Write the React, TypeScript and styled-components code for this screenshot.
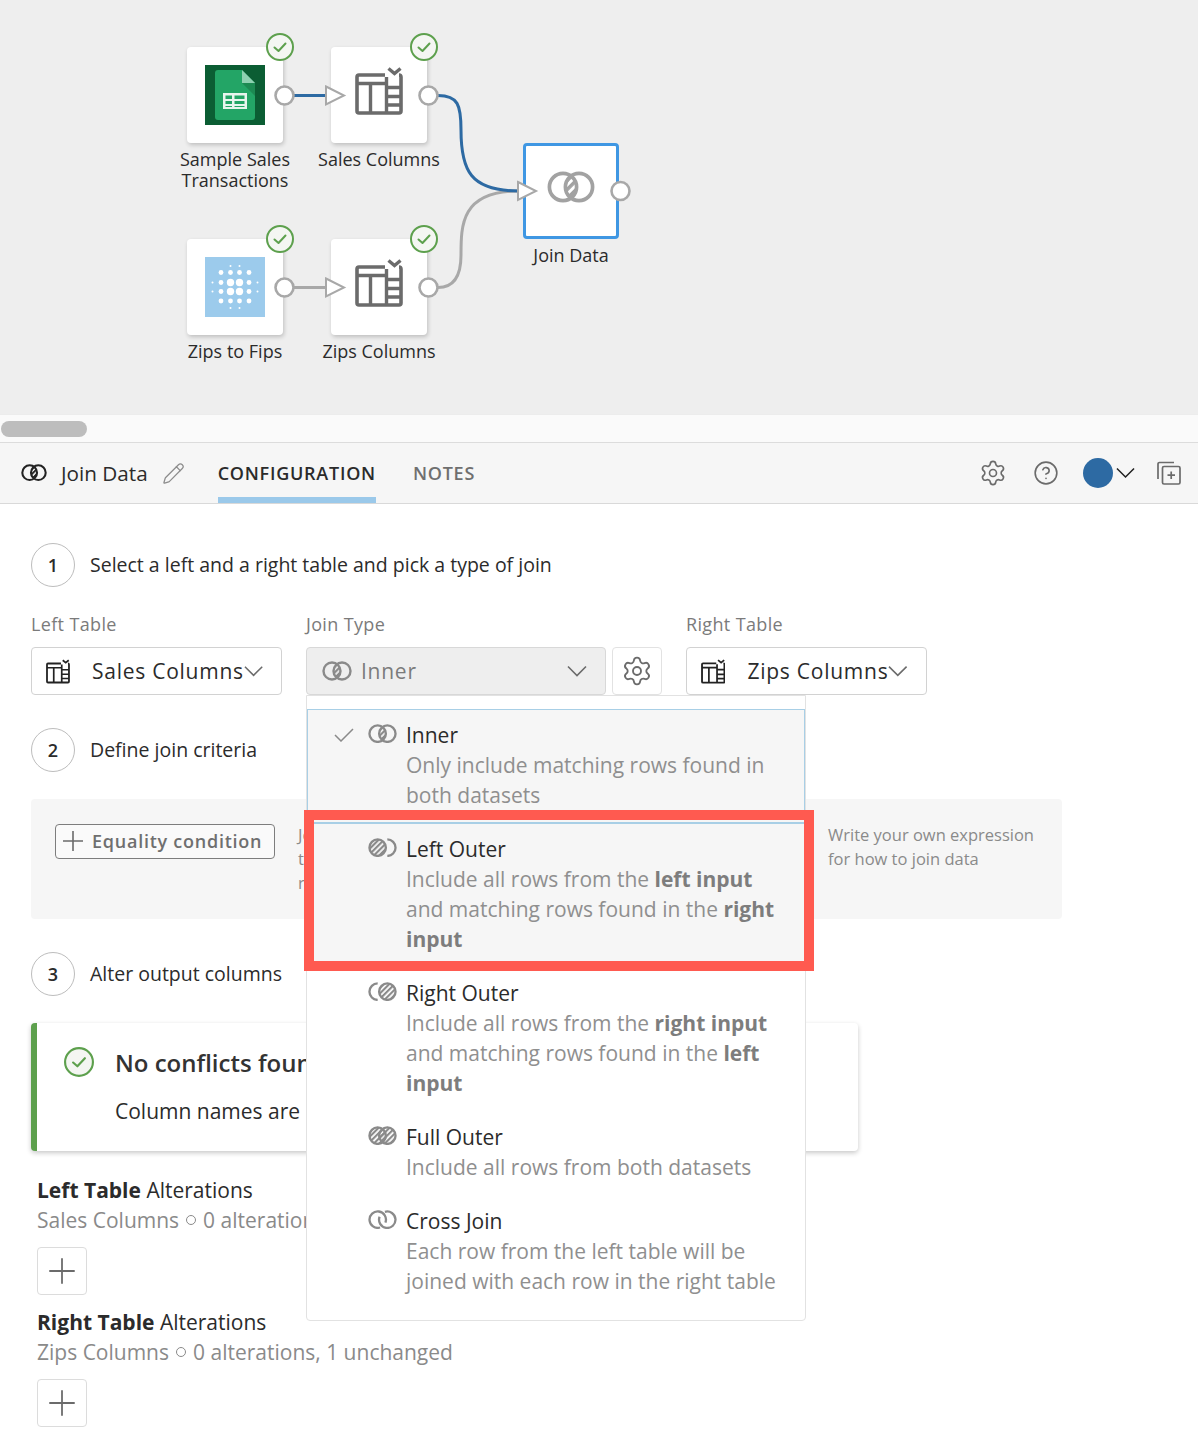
import { useId } from "react";
import styled, { createGlobalStyle } from "styled-components";
import { Settings, CircleHelp, Pencil } from "lucide-react";

const GlobalStyle = createGlobalStyle`
  * { box-sizing: border-box; }
  html, body { margin: 0; padding: 0; background: #fff; }
  body { font-family: "Open Sans", "Liberation Sans", sans-serif; color: #222; }
`;

const Page = styled.div`
  position: relative;
  width: 1198px;
  height: 1450px;
  overflow: hidden;
`;

/* flow canvas */
const Canvas = styled.div`
  position: relative;
  height: 414px;
  background: #eeeeee;
`;

const Wires = styled.svg`
  position: absolute;
  inset: 0;
  width: 100%;
  height: 100%;
`;

const Node = styled.div<{ $x: number; $y: number }>`
  position: absolute;
  left: ${(p) => p.$x}px;
  top: ${(p) => p.$y}px;
  width: 96px;
`;

const NodeCard = styled.div<{ $selected?: boolean }>`
  position: relative;
  width: 96px;
  height: 96px;
  display: flex;
  align-items: center;
  justify-content: center;
  padding-bottom: ${(p) => (p.$selected ? "8px" : "0")};
  background: #fff;
  border-radius: 4px;
  border: ${(p) => (p.$selected ? "3px solid #3f97e3" : "none")};
  box-shadow: ${(p) => (p.$selected ? "none" : "1px 2px 4px rgba(0, 0, 0, 0.2)")};
`;

const NodeTableArt = styled.div`
  display: flex;
  margin-top: -9px;
`;

const NodeLabel = styled.div`
  width: 160px;
  margin: 6px 0 0 -32px;
  font-size: 18px;
  line-height: 21px;
  text-align: center;
  color: #2b2b2b;
`;

const Badge = styled.div`
  position: absolute;
  right: -11px;
  top: -14px;
  width: 28px;
  height: 28px;
  display: flex;
`;

/* scroll bar */
const ScrollTrack = styled.div`
  height: 29px;
  padding: 6px 1px;
  background: #fafafa;
  border-top: 1px solid #ececec;
  border-bottom: 1px solid #dcdcdc;
`;

const ScrollThumb = styled.div`
  width: 86px;
  height: 16px;
  border-radius: 8px;
  background: #bdbdbd;
`;

/* panel header */
const PanelHeader = styled.header`
  height: 61px;
  display: flex;
  align-items: stretch;
  padding: 0 17px 0 21px;
  background: #f6f6f6;
  border-bottom: 1px solid #d9d9d9;
`;

const PanelTitle = styled.div`
  display: flex;
  align-items: center;
  font-size: 20.7px;
  color: #2b2b2b;
  svg:first-child { margin-right: 14px; }
  svg:last-child { margin-left: 14px; color: #8c8c8c; }
`;

const Tab = styled.div<{ $active?: boolean }>`
  display: flex;
  align-items: center;
  height: 60px;
  margin-left: ${(p) => (p.$active ? "33px" : "37px")};
  font-size: 18px;
  font-weight: 600;
  letter-spacing: 0.75px;
  color: ${(p) => (p.$active ? "#2b2b2b" : "#6f6f6f")};
  border-bottom: 6px solid ${(p) => (p.$active ? "#9bc9ea" : "transparent")};
  padding-top: 6px;
`;

const HeaderActions = styled.div`
  margin-left: auto;
  display: flex;
  align-items: center;
  color: #6b6b6b;
`;

const ActionGap = styled.div<{ $w: number }>`
  width: ${(p) => p.$w}px;
`;

const Avatar = styled.div`
  width: 30px;
  height: 30px;
  border-radius: 50%;
  background: #2d6aa3;
`;

/* panel body */
const Body = styled.main`
  padding: 39px 0 0 31px;
`;

const StepRow = styled.div<{ $top: number }>`
  display: flex;
  align-items: center;
  gap: 15px;
  margin-top: ${(p) => p.$top}px;
  font-size: 19.5px;
  line-height: 26px;
  color: #2b2b2b;
`;

const StepNumber = styled.div`
  width: 44px;
  height: 44px;
  display: flex;
  align-items: center;
  justify-content: center;
  border: 1px solid #bdbdbd;
  border-radius: 50%;
  font-size: 18px;
  font-weight: 600;
`;

const FieldRow = styled.div`
  display: flex;
  margin-top: 25px;
`;

const Field = styled.div<{ $gapAfter: number }>`
  margin-right: ${(p) => p.$gapAfter}px;
`;

const FieldLabel = styled.div`
  height: 24px;
  margin-bottom: 11px;
  font-size: 18px;
  font-weight: 500;
  letter-spacing: 0.35px;
  line-height: 24px;
  color: #7b7b7b;
`;

const Select = styled.div<{ $w: number; $disabled?: boolean }>`
  width: ${(p) => p.$w}px;
  height: 48px;
  display: flex;
  align-items: center;
  padding: 0 18px 0 ${(p) => (p.$disabled ? "15px" : "14px")};
  border: 1px solid ${(p) => (p.$disabled ? "#d8d8d8" : "#d2d2d2")};
  border-radius: 4px;
  background: ${(p) => (p.$disabled ? "#eeeeee" : "#fff")};
  color: ${(p) => (p.$disabled ? "#7b7b7b" : "#2b2b2b")};
  font-size: 21px;
  letter-spacing: 0.75px;
`;

const SelectText = styled.span<{ $ml: number }>`
  margin-left: ${(p) => p.$ml}px;
  flex: 1;
  white-space: nowrap;
`;

const GearButton = styled.div`
  width: 50px;
  height: 48px;
  margin-right: 24px;
  display: flex;
  align-items: center;
  justify-content: center;
  border: 1px solid #e2e2e2;
  border-radius: 4px;
  color: #6b6b6b;
`;

const CriteriaPanel = styled.section`
  width: 1031px;
  height: 120px;
  margin-top: 27px;
  padding: 25px 0 0 24px;
  display: grid;
  grid-template-columns: 243px 530px 1fr;
  border-radius: 4px;
  background: #f6f6f6;
`;

const OutlineButton = styled.div`
  width: 220px;
  height: 35px;
  display: flex;
  align-items: center;
  gap: 8px;
  padding: 0 0 1px 6px;
  border: 1px solid #7d7d7d;
  border-radius: 4px;
  background: #fafafa;
  font-size: 18px;
  font-weight: 600;
  letter-spacing: 0.75px;
  color: #6f6f6f;
`;

const CriteriaHint = styled.p`
  margin: -1px 0 0;
  font-size: 16.5px;
  line-height: 24px;
  color: #8a8a8a;
`;

const AlertCard = styled.section`
  width: 827px;
  height: 128px;
  margin-top: 27px;
  display: flex;
  padding: 24px 0 0 27px;
  background: #fff;
  border-left: 6px solid #5da04d;
  border-radius: 4px;
  box-shadow: 0 2px 5px rgba(0, 0, 0, 0.22);
`;

const AlertBody = styled.div`
  margin-left: 21px;
`;

const AlertTitle = styled.div`
  font-size: 24px;
  font-weight: 600;
  line-height: 32px;
  color: #333;
`;

const AlertText = styled.div`
  margin-top: 18px;
  font-size: 21px;
  line-height: 28px;
  color: #2b2b2b;
`;

const Alterations = styled.div<{ $top: number }>`
  margin: ${(p) => p.$top}px 0 0 6px;
`;

const AlterTitle = styled.div`
  font-size: 21px;
  line-height: 30px;
  color: #2b2b2b;
  b { font-weight: 700; }
`;

const AlterMeta = styled.div`
  display: flex;
  align-items: center;
  gap: 7px;
  white-space: nowrap;
  font-size: 21px;
  line-height: 30px;
  color: #8a8a8a;
`;

const MetaDot = styled.span`
  flex: none;
  width: 10px;
  height: 10px;
  border: 1px solid #8a8a8a;
  border-radius: 50%;
`;

const AddButton = styled.div`
  width: 50px;
  height: 48px;
  margin-top: 12px;
  display: flex;
  align-items: center;
  justify-content: center;
  border: 1px solid #dcdcdc;
  border-radius: 4px;
  color: #6b6b6b;
`;

/* dropdown that lies over the panel */
const Menu = styled.ul`
  position: absolute;
  left: 306px;
  top: 695px;
  width: 500px;
  height: 626px;
  margin: 0;
  padding: 13px 0 0;
  list-style: none;
  background: #fff;
  border: 1px solid #e2e2e2;
  border-radius: 0 0 4px 4px;
`;

const MenuItem = styled.li<{ $active?: boolean; $hover?: boolean }>`
  display: grid;
  grid-template-columns: 45px 39px 1fr;
  padding: 10px 20px 12px 14px;
  background: ${(p) => (p.$active || p.$hover ? "#f6f6f6" : "transparent")};
  border: 1px solid ${(p) => (p.$active ? "#a8cfe6" : "transparent")};
  border-top-color: ${(p) => (p.$active || p.$hover ? "#a8cfe6" : "transparent")};
`;

const MenuCheck = styled.div`
  padding: 5px 0 0 12px;
  color: #8a8a8a;
`;

const MenuIcon = styled.div`
  padding: 4px 0 0 1px;
`;

const MenuTitle = styled.div`
  font-size: 21px;
  line-height: 30px;
  color: #2b2b2b;
`;

const MenuDesc = styled.div`
  font-size: 21px;
  line-height: 30px;
  color: #8f8f8f;
  b { font-weight: 700; color: #7d7d7d; }
`;

const RedFrame = styled.div`
  position: absolute;
  left: 304px;
  top: 810px;
  width: 510px;
  height: 161px;
  border: 10px solid #ff5a50;
  pointer-events: none;
`;

/* drawings */
function Check({ size = 28 }: { size?: number }) {
  return (
    <svg width={size} height={size} viewBox="0 0 28 28" fill="none">
      <circle cx="14" cy="14" r="13" fill="#f4f6f2" stroke="#5da04d" strokeWidth="2" />
      <path d="M8.5 14.5l4 3.5 7-7.5" stroke="#5da04d" strokeWidth="2" strokeLinecap="round" strokeLinejoin="round" />
    </svg>
  );
}

function TableIcon({ size = 48, color = "#6b6b6b" }: { size?: number; color?: string }) {
  return (
    <svg width={size} height={size} viewBox="0 0 48 48" fill="none" stroke={color}>
      <path d="M30 8H4A2 2 0 0 0 2 10V44A2 2 0 0 0 4 46H44A2 2 0 0 0 46 44V10A2 2 0 0 0 44 8" strokeWidth="3.6" />
      <path d="M2 16.5H31M15.5 16.5V45M31.5 10V45M31.5 20.5H46M31.5 29.5H46M31.5 38H46" strokeWidth="3.4" />
      <path d="M33.5 1.5L39.5 6.5L45.5 1.5" strokeWidth="3.4" />
    </svg>
  );
}

function SheetsLogo() {
  return (
    <svg width="60" height="60" viewBox="0 0 60 60">
      <rect width="60" height="60" fill="#0b5d33" />
      <path d="M13 5H37L50 18V52A3 3 0 0 1 47 55H13A3 3 0 0 1 10 52V8A3 3 0 0 1 13 5Z" fill="#23a566" />
      <path d="M37 5L50 18H37Z" fill="#8ed1b1" />
      <path d="M37 18L50 31V18Z" fill="#1c8a52" />
      <path d="M18 28H42V44H18ZM20.5 30.5V34H27V30.5ZM29.5 30.5V34H39.5V30.5ZM20.5 36V39H27V36ZM29.5 36V39H39.5V36ZM20.5 41V42H27V41ZM29.5 41V42H39.5V41Z" fill="#e8f5ee" fillRule="evenodd" />
    </svg>
  );
}

const DOTS: [number, number, number][] = [
  [25.5, 9, 1], [34.5, 9, 1],
  [16, 15.5, 2.4], [25.5, 15.5, 2.4], [34.5, 15.5, 2.4], [44, 15.5, 2.4],
  [7.5, 25.5, 1], [16, 25.5, 2.4], [25.5, 25.5, 3.7], [34.5, 25.5, 3.7], [44, 25.5, 2.4], [52.5, 25.5, 1],
  [7.5, 34.5, 1], [16, 34.5, 2.4], [25.5, 34.5, 3.7], [34.5, 34.5, 3.7], [44, 34.5, 2.4], [52.5, 34.5, 1],
  [16, 44, 2.4], [25.5, 44, 2.4], [34.5, 44, 2.4], [44, 44, 2.4],
  [25.5, 51, 1], [34.5, 51, 1],
];

function DotsLogo() {
  return (
    <svg width="60" height="60" viewBox="0 0 60 60">
      <rect width="60" height="60" fill="#9ccbec" />
      {DOTS.map(([cx, cy, r]) => (
        <circle key={`${cx}-${cy}`} cx={cx} cy={cy} r={r} fill="#fff" />
      ))}
    </svg>
  );
}

type JoinKind = "inner" | "left" | "right" | "full" | "cross";

function JoinIcon({ kind, width = 29, color = "#8a8a8a", strokeWidth = 2.4 }: { kind: JoinKind; width?: number; color?: string; strokeWidth?: number }) {
  const id = useId().replace(/[^a-zA-Z0-9]/g, "");
  const height = (width * 20) / 30;
  const hatch = `url(#${id}h)`;
  return (
    <svg width={width} height={height} viewBox="0 0 30 20" fill="none" stroke={color} strokeWidth={strokeWidth}>
      <defs>
        <pattern id={`${id}h`} width="4" height="4" patternUnits="userSpaceOnUse" patternTransform="rotate(-45)">
          <rect width="4" height="2.2" fill={color} stroke="none" />
        </pattern>
        <clipPath id={`${id}l`}>
          <circle cx="10" cy="10" r="8.5" />
        </clipPath>
      </defs>
      {kind === "inner" && (
        <>
          <circle cx="10" cy="10" r="8.5" />
          <circle cx="20" cy="10" r="8.5" />
          <circle cx="20" cy="10" r="8.5" clipPath={`url(#${id}l)`} fill={hatch} stroke="none" />
        </>
      )}
      {kind === "left" && (
        <>
          <circle cx="10" cy="10" r="8.5" fill={hatch} />
          <path d="M20 1.5A8.5 8.5 0 0 1 20 18.5" />
        </>
      )}
      {kind === "right" && (
        <>
          <path d="M10 1.5A8.5 8.5 0 0 0 10 18.5" />
          <circle cx="20" cy="10" r="8.5" fill={hatch} />
        </>
      )}
      {kind === "full" && (
        <>
          <circle cx="10" cy="10" r="8.5" fill={hatch} />
          <circle cx="20" cy="10" r="8.5" fill={hatch} />
        </>
      )}
      {kind === "cross" && (
        <>
          <path d="M12.5 18.1A8.5 8.5 0 1 1 18 13" />
          <path d="M17.5 1.9A8.5 8.5 0 1 1 12 7" />
        </>
      )}
    </svg>
  );
}

function Chevron({ size = 20, color = "#6b6b6b" }: { size?: number; color?: string }) {
  return (
    <svg width={size} height={size * 0.6} viewBox="0 0 20 12" fill="none" stroke={color} strokeWidth="1.6">
      <path d="M1 1.5l9 9 9-9" />
    </svg>
  );
}

function ThinPlus({ size = 22, color = "#6b6b6b", weight = 1.6 }: { size?: number; color?: string; weight?: number }) {
  return (
    <svg width={size} height={size} viewBox="0 0 22 22" fill="none" stroke={color} strokeWidth={weight}>
      <path d="M11 1V21M1 11H21" />
    </svg>
  );
}

function AddCopy() {
  return (
    <svg width="24" height="24" viewBox="0 0 24 24" fill="none" stroke="#6b6b6b" strokeWidth="1.7">
      <path d="M17 1.5H2.5A1.5 1.5 0 0 0 1 3V18" />
      <rect x="5.5" y="5.5" width="17.5" height="17.5" rx="1.5" />
      <path d="M14.2 10.5V18M10.5 14.2H18" />
    </svg>
  );
}

function TinyCheck() {
  return (
    <svg width="20" height="14" viewBox="0 0 20 14" fill="none" stroke="#8a8a8a" strokeWidth="1.5">
      <path d="M1 7l6 6L19 1" />
    </svg>
  );
}

function Port({ cx, cy }: { cx: number; cy: number }) {
  return <circle cx={cx} cy={cy} r="9" fill="#fff" stroke="#a8a8a8" strokeWidth="2.6" />;
}

function Arrow({ x, y }: { x: number; y: number }) {
  return <path d={`M${x} ${y - 9}L${x + 18} ${y}L${x} ${y + 9}Z`} fill="#fff" stroke="#a8a8a8" strokeWidth="2" />;
}

const NODES = [
  { x: 187, y: 47, label: "Sample Sales Transactions", art: <SheetsLogo /> },
  { x: 331, y: 47, label: "Sales Columns", art: <NodeTableArt><TableIcon /></NodeTableArt> },
  { x: 187, y: 239, label: "Zips to Fips", art: <DotsLogo /> },
  { x: 331, y: 239, label: "Zips Columns", art: <NodeTableArt><TableIcon /></NodeTableArt> },
];

export default function App() {
  return (
    <Page>
      <GlobalStyle />
      <Canvas>
        {NODES.map((n) => (
          <Node key={n.label} $x={n.x} $y={n.y}>
            <NodeCard>
              {n.art}
              <Badge>
                <Check />
              </Badge>
            </NodeCard>
            <NodeLabel>{n.label === "Sample Sales Transactions" ? <>Sample Sales<br />Transactions</> : n.label}</NodeLabel>
          </Node>
        ))}
        <Node $x={523} $y={143}>
          <NodeCard $selected>
            <JoinIcon kind="inner" width={48} color="#a2a2a2" strokeWidth={2.3} />
          </NodeCard>
          <NodeLabel>Join Data</NodeLabel>
        </Node>
        <Wires viewBox="0 0 1198 414" fill="none">
          <path d="M294 95.5H326" stroke="#2d6aa3" strokeWidth="3" />
          <path d="M294 287.5H326" stroke="#a8a8a8" strokeWidth="3" />
          <path d="M438 287.5C455 287.5 461 275 461 255C461 225 461 191 519 191" stroke="#a8a8a8" strokeWidth="3" />
          <path d="M438 95.5C458 95.5 461 105 461 130C461 170 470 191 519 191" stroke="#2d6aa3" strokeWidth="3" />
          <Port cx={284.5} cy={95.5} />
          <Port cx={428.5} cy={95.5} />
          <Port cx={284.5} cy={287.5} />
          <Port cx={428.5} cy={287.5} />
          <Port cx={620.5} cy={191} />
          <Arrow x={326} y={95.5} />
          <Arrow x={326} y={287.5} />
          <Arrow x={518} y={191} />
        </Wires>
      </Canvas>

      <ScrollTrack>
        <ScrollThumb />
      </ScrollTrack>

      <PanelHeader>
        <PanelTitle>
          <JoinIcon kind="inner" width={26} color="#222" strokeWidth={2.4} />
          Join Data
          <Pencil size={23} strokeWidth={1.3} />
        </PanelTitle>
        <Tab $active>CONFIGURATION</Tab>
        <Tab>NOTES</Tab>
        <HeaderActions>
          <Settings size={28} strokeWidth={1.4} />
          <ActionGap $w={26} />
          <CircleHelp size={26} strokeWidth={1.5} />
          <ActionGap $w={24} />
          <Avatar />
          <ActionGap $w={3} />
          <Chevron size={19} color="#222" />
          <ActionGap $w={22} />
          <AddCopy />
        </HeaderActions>
      </PanelHeader>

      <Body>
        <StepRow $top={0}>
          <StepNumber>1</StepNumber>
          Select a left and a right table and pick a type of join
        </StepRow>

        <FieldRow>
          <Field $gapAfter={24}>
            <FieldLabel>Left Table</FieldLabel>
            <Select $w={251}>
              <TableIcon size={25} color="#222" />
              <SelectText $ml={22}>Sales Columns</SelectText>
              <Chevron />
            </Select>
          </Field>
          <Field $gapAfter={6}>
            <FieldLabel>Join Type</FieldLabel>
            <Select $w={300} $disabled>
              <JoinIcon kind="inner" width={30} />
              <SelectText $ml={9}>Inner</SelectText>
              <Chevron />
            </Select>
          </Field>
          <Field $gapAfter={0}>
            <FieldLabel>&nbsp;</FieldLabel>
            <GearButton>
              <Settings size={32} strokeWidth={1.4} />
            </GearButton>
          </Field>
          <Field $gapAfter={0}>
            <FieldLabel>Right Table</FieldLabel>
            <Select $w={241}>
              <TableIcon size={25} color="#222" />
              <SelectText $ml={22}>Zips Columns</SelectText>
              <Chevron />
            </Select>
          </Field>
        </FieldRow>

        <StepRow $top={33}>
          <StepNumber>2</StepNumber>
          Define join criteria
        </StepRow>

        <CriteriaPanel>
          <OutlineButton>
            <ThinPlus size={22} />
            Equality condition
          </OutlineButton>
          <CriteriaHint>
            Join on columns where
            <br />
            the values are equal
            <br />
            row by row
          </CriteriaHint>
          <CriteriaHint>
            Write your own expression
            <br />
            for how to join data
          </CriteriaHint>
        </CriteriaPanel>

        <StepRow $top={33}>
          <StepNumber>3</StepNumber>
          Alter output columns
        </StepRow>

        <AlertCard>
          <Check size={30} />
          <AlertBody>
            <AlertTitle>No conflicts found</AlertTitle>
            <AlertText>Column names are unique across both tables</AlertText>
          </AlertBody>
        </AlertCard>

        <Alterations $top={24}>
          <AlterTitle>
            <b>Left Table</b> Alterations
          </AlterTitle>
          <AlterMeta>
            Sales Columns <MetaDot /> 0 alterations, 1 unchanged
          </AlterMeta>
          <AddButton>
            <ThinPlus size={28} weight={1.4} />
          </AddButton>
        </Alterations>

        <Alterations $top={12}>
          <AlterTitle>
            <b>Right Table</b> Alterations
          </AlterTitle>
          <AlterMeta>
            Zips Columns <MetaDot /> 0 alterations, 1 unchanged
          </AlterMeta>
          <AddButton>
            <ThinPlus size={28} weight={1.4} />
          </AddButton>
        </Alterations>
      </Body>

      <Menu>
        <MenuItem $active>
          <MenuCheck>
            <TinyCheck />
          </MenuCheck>
          <MenuIcon>
            <JoinIcon kind="inner" />
          </MenuIcon>
          <div>
            <MenuTitle>Inner</MenuTitle>
            <MenuDesc>Only include matching rows found in both datasets</MenuDesc>
          </div>
        </MenuItem>
        <MenuItem $hover>
          <span />
          <MenuIcon>
            <JoinIcon kind="left" />
          </MenuIcon>
          <div>
            <MenuTitle>Left Outer</MenuTitle>
            <MenuDesc>
              Include all rows from the <b>left input</b> and matching rows found in the <b>right input</b>
            </MenuDesc>
          </div>
        </MenuItem>
        <MenuItem>
          <span />
          <MenuIcon>
            <JoinIcon kind="right" />
          </MenuIcon>
          <div>
            <MenuTitle>Right Outer</MenuTitle>
            <MenuDesc>
              Include all rows from the <b>right input</b> and matching rows found in the <b>left input</b>
            </MenuDesc>
          </div>
        </MenuItem>
        <MenuItem>
          <span />
          <MenuIcon>
            <JoinIcon kind="full" />
          </MenuIcon>
          <div>
            <MenuTitle>Full Outer</MenuTitle>
            <MenuDesc>Include all rows from both datasets</MenuDesc>
          </div>
        </MenuItem>
        <MenuItem>
          <span />
          <MenuIcon>
            <JoinIcon kind="cross" />
          </MenuIcon>
          <div>
            <MenuTitle>Cross Join</MenuTitle>
            <MenuDesc>Each row from the left table will be joined with each row in the right table</MenuDesc>
          </div>
        </MenuItem>
      </Menu>
      <RedFrame />
    </Page>
  );
}
